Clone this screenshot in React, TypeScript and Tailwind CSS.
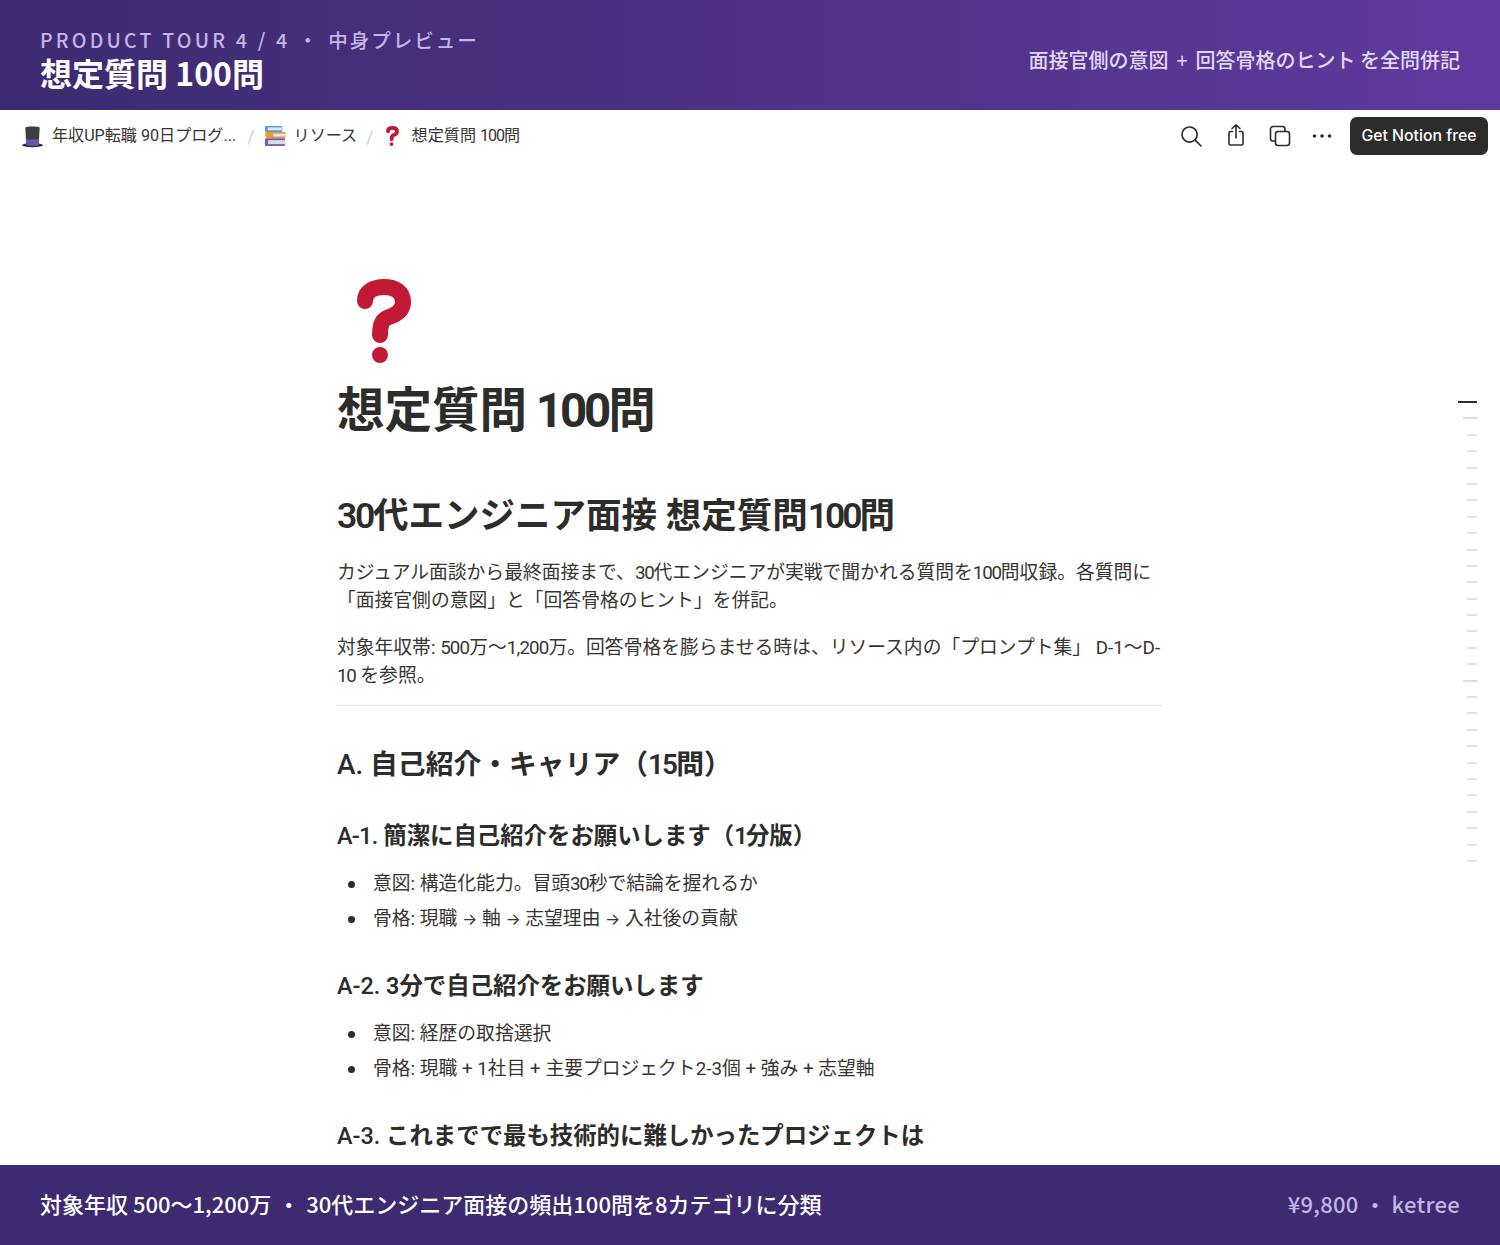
const body = "font-['Roboto','Noto_Sans_CJK_JP',sans-serif]";
const band = "font-['Noto_Sans_CJK_JP',sans-serif]";

// Latin digits sit tighter than Roboto's default in the reference
function N({ children }: { children: React.ReactNode }) {
  return <span className="tracking-[-0.065em]">{children}</span>;
}

function TopHat({ className }: { className?: string }) {
  return (
    <svg viewBox="0 0 24 24" className={className}>
      <ellipse cx="12" cy="21" rx="11" ry="2.2" fill="#2b2b2f" />
      <path d="M4.5 2.8C4.5 1 19.5 1 19.5 2.8L18.5 20.5C18.5 22 5.5 22 5.5 20.5Z" fill="#3d3d42" />
      <path d="M5 14.5C8 15.4 16 15.4 19 14.5L18.5 20.5C18.5 22 5.5 22 5.5 20.5Z" fill="#7450b0" />
    </svg>
  );
}

function Books({ className }: { className?: string }) {
  return (
    <svg viewBox="0 0 24 24" className={className}>
      <rect x="1" y="1" width="19" height="6.5" rx="1" fill="#5b9bd5" />
      <rect x="4" y="2.6" width="15.5" height="3.2" fill="#dfe6ee" />
      <rect x="2.5" y="7.5" width="21" height="7" rx="1" fill="#d99a6c" />
      <rect x="1.5" y="8" width="8" height="5" rx="1" fill="#f59e0b" />
      <rect x="10" y="9.5" width="13.5" height="3" fill="#ece6df" />
      <rect x="1" y="14.5" width="22" height="8.5" rx="1.2" fill="#7a5bb0" />
      <rect x="4.5" y="16.5" width="18.5" height="4.4" fill="#dcd8e8" />
    </svg>
  );
}

function Question({ className }: { className?: string }) {
  return (
    <svg viewBox="0 0 54 84" className={className}>
      <path
        d="M8 22C8 12 17 8 27 8C38 8 46 13 46 23C46 32 38 36 32 38C26 40 23 44 23 56"
        fill="none"
        stroke="#c21a36"
        strokeWidth="16"
        strokeLinecap="round"
      />
      <circle cx="23" cy="76" r="8" fill="#c21a36" />
    </svg>
  );
}

function TocMarks() {
  const longOnes = [1, 17];
  return (
    <div className="absolute right-[23px] top-[291px] flex flex-col items-end gap-[14.4px]">
      <div className="h-[2px] w-[19px] bg-[#2c2c2b]" />
      {Array.from({ length: 28 }, (_, i) => (
        <div
          key={i}
          className={
            longOnes.includes(i + 1) ? "h-[2px] w-[14px] bg-[#dededc]" : "h-[2px] w-[10px] bg-[#e3e3e1]"
          }
        />
      ))}
    </div>
  );
}

function Question3({ label, labelClass, children }: { label: string; labelClass?: string; children: React.ReactNode }) {
  return (
    <h3 className="text-[23.4px] font-semibold leading-[30px] text-[#2c2c2b]">
      <span className={`font-medium ${labelClass ?? ""}`}>{label}</span> {children}
    </h3>
  );
}

function Bullets({ items }: { items: React.ReactNode[] }) {
  return (
    <ul className="mt-[19px] flex flex-col gap-[7px]">
      {items.map((t, i) => (
        <li key={i} className="flex items-center text-[18.8px] leading-[28px] text-[#37352f]">
          <span className="ml-[11px] mr-[18px] size-[7px] rounded-full bg-[#2c2c2b]" />
          <span>{t}</span>
        </li>
      ))}
    </ul>
  );
}

function Arrow() {
  return <span className="font-['Inter',sans-serif] text-[16px]">→</span>;
}

export default function App() {
  return (
    <div className={`flex h-[1245px] w-[1500px] flex-col overflow-hidden bg-white ${body}`}>
      <header className={`flex h-[110px] shrink-0 items-center justify-between bg-gradient-to-r from-[#3d2a70] to-[#5e3a9e] px-10 pt-[10px] ${band}`}>
        <div>
          <p className="text-[19.5px] font-medium leading-[24px] text-[#c4b5e8]">
            <span className="tracking-[3.2px]">PRODUCT TOUR 4 / 4 ・ </span>
            <span className="tracking-[2px]">中身プレビュー</span>
          </p>
          <p className="text-[32px] font-bold leading-[40px] text-white">想定質問 100問</p>
        </div>
        <p className="text-[20px] font-medium text-[#e2d8f5]">
          面接官側の意図 <span className="mx-[3.5px] font-normal">+</span> 回答骨格のヒント を全問併記
        </p>
      </header>

      <main className="relative min-h-0 flex-1 overflow-hidden">
        <nav className="flex h-[52px] items-center justify-between pl-[21px] pr-[12px] text-[#37352f]">
          <div className="flex items-center text-[16.1px]">
            <TopHat className="size-[23px]" />
            <span className="ml-[8px]">年収UP転職 90日プログ...</span>
            <span className="ml-[11px] mr-[9px] text-[18px] text-[#d0d0ce]">/</span>
            <Books className="size-[22px]" />
            <span className="ml-[8px]">リソース</span>
            <span className="ml-[9px] mr-[11px] text-[18px] text-[#d0d0ce]">/</span>
            <Question className="h-[20px] w-[15px]" />
            <span className="ml-[12px]">
              想定質問 <N>100</N>問
            </span>
          </div>
          <div className="flex items-center">
            <svg viewBox="0 0 24 24" className="size-[24px]" fill="none" stroke="#2c2c2b" strokeWidth="1.7" strokeLinecap="round">
              <circle cx="10.6" cy="10.6" r="7.6" />
              <path d="M16.2 16.2L22 22" />
            </svg>
            <svg viewBox="0 0 24 24" className="ml-[21px] size-[24px] -translate-y-[1px]" fill="none" stroke="#2c2c2b" strokeWidth="1.6" strokeLinecap="round" strokeLinejoin="round">
              <path d="M8.5 8.5H6.5A1.5 1.5 0 0 0 5 10V20.5A1.5 1.5 0 0 0 6.5 22H17.5A1.5 1.5 0 0 0 19 20.5V10A1.5 1.5 0 0 0 17.5 8.5H15.5" />
              <path d="M12 15V2M8 5.5L12 1.8L16 5.5" />
            </svg>
            <svg viewBox="0 0 24 24" className="ml-[20px] size-[24px]" fill="none" stroke="#2c2c2b" strokeWidth="1.6" strokeLinejoin="round">
              <path d="M7 17H5A2.5 2.5 0 0 1 2.5 14.5V5A2.5 2.5 0 0 1 5 2.5H14.5A2.5 2.5 0 0 1 17 5V7" />
              <rect x="7.5" y="7.5" width="14" height="14" rx="2.5" />
            </svg>
            <svg viewBox="0 0 24 24" className="ml-[18px] size-[24px]" fill="#2c2c2b">
              <circle cx="4.5" cy="12" r="1.8" />
              <circle cx="12" cy="12" r="1.8" />
              <circle cx="19.5" cy="12" r="1.8" />
            </svg>
            <button className="ml-[16px] h-[38px] w-[138px] rounded-[7px] bg-[#2c2c2b] font-['Inter',sans-serif] text-[15.8px] font-medium text-white">
              Get Notion free
            </button>
          </div>
        </nav>

        <TocMarks />

        <article className="mx-auto w-[826px] pt-[117px]">
          <Question className="ml-[20px] h-[84px] w-[54px]" />
          <h1 className="mt-[17px] text-[47.5px] font-bold leading-[62px] text-[#2c2c2b]">
            想定質問<N> 100</N>問
          </h1>
          <h2 className="mt-[51px] text-[35.5px] font-semibold leading-[46px] text-[#2c2c2b]">
            <N>30</N>代エンジニア面接 想定質問<span className="tracking-[-0.085em]">100</span>問
          </h2>
          <p className="mt-[20px] text-[18.8px] leading-[28px] text-[#37352f]">
            カジュアル面談から最終面接まで、<N>30</N>代エンジニアが実戦で聞かれる質問を<N>100</N>問収録。各質問に
            <br />
            「面接官側の意図」と「回答骨格のヒント」を併記。
          </p>
          <p className="mt-[19px] text-[18.8px] leading-[28px] text-[#37352f]">
            対象年収帯: <span className="tracking-[-0.045em]">500</span>万〜<span className="tracking-[-0.045em]">1,200</span>万。回答骨格を膨らませる時は、リソース内の「プロンプト集」 D-1〜D-
            <br />
            <N>10</N> を参照。
          </p>
          <div className="mt-[15px] h-px bg-[#e5e5e3]" />
          <h2 className="mt-[39px] text-[27.8px] font-semibold leading-[40px] text-[#2c2c2b]">
            <span className="font-medium">A.</span> 自己紹介・キャリア（<N>15</N>問）
          </h2>
          <div className="mt-[36px]">
            <Question3 label="A-1." labelClass="tracking-[-0.03em]">
              簡潔に自己紹介をお願いします（<N>1</N>分版）
            </Question3>
            <Bullets
              items={[
                <>
                  意図: 構造化能力。冒頭<N>30</N>秒で結論を握れるか
                </>,
                <>
                  骨格: 現職 <Arrow /> 軸 <Arrow /> 志望理由 <Arrow /> 入社後の貢献
                </>,
              ]}
            />
          </div>
          <div className="mt-[38px]">
            <Question3 label="A-2.">3分で自己紹介をお願いします</Question3>
            <Bullets items={["意図: 経歴の取捨選択", "骨格: 現職 + 1社目 + 主要プロジェクト2-3個 + 強み + 志望軸"]} />
          </div>
          <div className="mt-[38px]">
            <Question3 label="A-3.">これまでで最も技術的に難しかったプロジェクトは</Question3>
          </div>
        </article>
      </main>

      <footer className={`flex h-[80px] shrink-0 items-center justify-between bg-[#3d2a70] px-10 pb-1 text-[22px] font-medium ${band}`}>
        <p className="text-white">
          対象年収 500〜1,200万 <span className="mx-[1.5px]">・</span> 30代エンジニア面接の頻出100問を8カテゴリに分類
        </p>
        <p className="tracking-[0.3px] text-[#c4b5e8]">¥9,800 ・ ketree</p>
      </footer>
    </div>
  );
}
